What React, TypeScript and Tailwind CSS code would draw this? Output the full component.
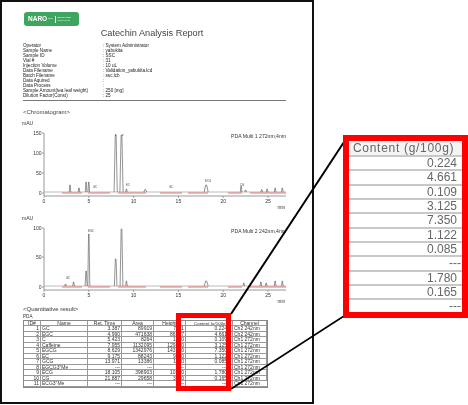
const font = { fontFamily: '"Liberation Sans", Arial, sans-serif' };

const info: [string, string][] = [
  ["Operator", ": System Administrator"],
  ["Sample Name", ": yabukita"],
  ["Sample ID", ": SSC"],
  ["Vial #", ": 31"],
  ["Injection Volume", ": 10 uL"],
  ["Data Filename", ": Validation_yabukita.lcd"],
  ["Batch Filename", ": ssc.lcb"],
  ["Data Aquired", ":"],
  ["Data Process", ":"],
  ["Sample Amount(tea leaf weight)", ": 250 [mg]"],
  ["Dilution Factor(Const)", ": 25"],
];

const rows: string[][] = [
  ["1", "GC", "3.387", "89919", "7711", "0.224", "Ch2 242nm"],
  ["2", "EGC", "4.990", "471638", "86567", "4.661", "Ch2 242nm"],
  ["3", "C", "5.423", "8264", "1300", "0.109", "Ch1 272nm"],
  ["4", "Caffeine", "7.955", "1132095", "129400", "3.125", "Ch1 272nm"],
  ["5", "EGCG", "8.629", "1342976", "143600", "7.350", "Ch1 272nm"],
  ["6", "EC", "9.175", "88243", "9100", "1.122", "Ch1 272nm"],
  ["7", "GCG", "13.971", "13386", "1100", "0.085", "Ch1 272nm"],
  ["8", 'EGCG3"Me', "---", "---", "---", "---", "Ch1 272nm"],
  ["9", "ECG", "18.105", "398903", "10400", "1.780", "Ch1 272nm"],
  ["10", "CG", "21.887", "29658", "3000", "0.165", "Ch1 272nm"],
  ["11", 'ECG3"Me', "---", "---", "---", "---", "Ch1 272nm"],
];

const head = ["ID#", "Name", "Ret. Time", "Area", "Height", "Content (g/100g)", "Channel"];
const callout = ["0.224", "4.661", "0.109", "3.125", "7.350", "1.122", "0.085", "---", "1.780", "0.165", "---"];

function peak(x: number, h: number, base: number, w = 1.4) {
  return `M${x - w} ${base} L${x - w * 0.25} ${base - h} L${x + w * 0.25} ${base - h} L${x + w} ${base}`;
}

function Chart({
  title,
  yLabels,
  peaks,
  height,
  top,
  mauY,
  notes,
}: {
  title: string;
  yLabels: [string, number][];
  peaks: [number, number, number?][];
  height: number;
  top: number;
  mauY: number;
  notes: [number, number, string][];
}) {
  const base = 74;
  const axis = 77;
  const ticks = [0, 5, 10, 15, 20, 25];
  const sx = (t: number) => 22 + t * 8.96;
  return (
    <svg width="264" height={height} viewBox={`0 0 264 ${height}`} className="block shrink-0">
      <text x="0" y={mauY} fontSize="5" fill="#333">mAU</text>
      <line x1="22" y1={top} x2="22" y2={axis} stroke="#555" strokeWidth="0.6" />
      <line x1="22" y1={axis} x2="264" y2={axis} stroke="#555" strokeWidth="0.6" />
      {yLabels.map(([l, y]) => (
        <g key={l}>
          <text x="19.5" y={y + 1.8} fontSize="5" textAnchor="end" fill="#333">{l}</text>
          <line x1="20" y1={y} x2="22" y2={y} stroke="#555" strokeWidth="0.5" />
        </g>
      ))}
      {ticks.map((t) => (
        <g key={t}>
          <line x1={sx(t)} y1={axis} x2={sx(t)} y2={axis + 2} stroke="#555" strokeWidth="0.5" />
          <text x={sx(t)} y={axis + 7} fontSize="5" textAnchor="middle" fill="#333">{t}</text>
        </g>
      ))}
      <text x="263" y={axis + 13} fontSize="4.6" textAnchor="end" fill="#333">min</text>
      <text x="264" y={top + 4.5} fontSize="5.1" textAnchor="end" fill="#333">{title}</text>
      <line x1="22" y1={base - 1} x2="264" y2={base - 1} stroke="#bbb" strokeWidth="1.2" />
      {peaks.map(([t, h, w], i) => (
        <path key={i} d={peak(sx(t), h, base - 1, w ?? 0.8)} fill="none" stroke="#666" strokeWidth="0.7" />
      ))}
      <path
        d={`M40 ${base} H60 M66 ${base} H88 M96 ${base} H124 M138 ${base} H160 M166 ${base} H186 M206 ${base} H220 M228 ${base} H264`}
        stroke="#e8504f"
        strokeWidth="0.8"
        fill="none"
      />
      {notes.map(([x, y, s], i) => (
        <text key={i} x={x} y={y} fontSize="2.8" fill="#444" textAnchor="middle">{s}</text>
      ))}
    </svg>
  );
}

export default function App() {
  return (
    <div className="relative w-[468px] h-[405px] bg-white overflow-hidden" style={font}>
      <div className="w-[314px] h-[404px] border-2 border-[#111] bg-white flex flex-col pl-[20px] pr-[26px] pt-[10px] text-[#333] blur-[0.35px]">
        <div className="w-[55px] h-[14px] rounded-[3px] bg-[#3fa45f] ml-[2px] flex items-center pl-[4px] gap-[1px] text-white shrink-0">
          <span className="text-[6.5px] font-bold leading-none">NARO</span>
          <span className="text-[2.5px] leading-none">hmp</span>
          <span className="w-[0.5px] h-[7px] bg-white mx-[1px]"></span>
          <span className="text-[2.5px] leading-[3px] w-[16px]">EDUCATED WITH NATI</span>
        </div>
        <div className="text-[9.2px] leading-[12px] text-center text-[#444] mt-[1px] pr-[4px] shrink-0">
          Catechin Analysis Report
        </div>
        <div className="mt-[5px] flex flex-col text-[4.6px] leading-[4.95px] text-[#222] shrink-0">
          {info.map(([a, b]) => (
            <div key={a} className="flex">
              <span className="w-[81px] shrink-0 pl-[1px] whitespace-nowrap">{a}</span>
              <span>{b}</span>
            </div>
          ))}
        </div>
        <div className="h-[1px] bg-[#777] mt-[2px] shrink-0 ml-[1px]"></div>
        <div className="text-[6px] leading-[6px] mt-[7.5px] pl-[1px] text-[#444] shrink-0">&lt;Chromatogram&gt;</div>
        <div className="mt-[4px] shrink-0">
          <Chart
            title="PDA Multi 1 272nm,4nm"
            height={94}
            top={14}
            mauY={6}
            yLabels={[["150", 14], ["100", 34], ["50", 54], ["0", 74]]}
            peaks={[[2.9, 7], [3.9, 4], [4.7, 10], [5, 10], [8, 57, 1.6], [8.65, 57, 1.6], [9.2, 3], [11.3, 2.5, 1.4], [18.1, 7, 2], [22, 6], [22.5, 2], [24.3, 2.5], [24.9, 3], [25.8, 4], [26.6, 4]]}
            notes={[[94, 17, "▾"], [101, 17, "▾"], [73, 69, "GC"], [106, 67, "EC"], [149, 69, "GC"], [186, 63, "ECG"], [220, 67, "CG"]]}
          />
        </div>
        <div className="shrink-0">
          <Chart
            title="PDA Multi 2 242nm,4nm"
            height={90}
            top={15}
            mauY={7}
            yLabels={[["100", 15], ["50", 44], ["0", 74]]}
            peaks={[[2.4, 2], [3.3, 4], [4.7, 15, 1], [5, 52, 1], [8, 27, 1.3], [8.65, 57, 1.4], [9.2, 5], [18.1, 5, 2], [22.3, 3], [24.2, 4], [24.8, 3], [25.8, 5], [26.6, 5]]}
            notes={[[69, 19, "EGC"], [46, 66, "GC"]]}
          />
        </div>
        <div className="text-[6px] leading-[6px] mt-[3.5px] pl-[1px] text-[#333] shrink-0">&lt;Quantitative result&gt;</div>
        <div className="text-[4.6px] leading-[5px] mt-[2px] pl-[1px] shrink-0">PDA</div>
        <div className="w-[245px] ml-[1px] mt-[0.5px] border border-[#888] grid grid-cols-[17px_47px_34px_32px_32px_47px_34px] text-[5px] leading-[5px] text-[#333] shrink-0">
          {head.map((h, i) => (
            <div
              key={h}
              className={`h-[5.5px] border-r border-b border-[#999] overflow-hidden whitespace-nowrap last:border-r-0 ${
                i === 5 ? "text-right pr-[5px] text-[4.4px]" : "text-center"
              }`}
            >
              {h}
            </div>
          ))}
          {rows.map((r) =>
            r.map((c, i) => (
              <div
                key={r[0] + i}
                className={`h-[5.5px] border-r border-b border-[#999] overflow-hidden whitespace-nowrap last:border-r-0 ${
                  i === 5 ? "text-right pr-[5px]" : i === 0 || i === 2 || i === 3 || i === 4 ? "text-right px-[1px]" : "text-left px-[1px]"
                }`}
              >
                {c}
              </div>
            ))
          )}
        </div>
      </div>

      <svg width="468" height="405" viewBox="0 0 468 405" className="absolute left-0 top-0 pointer-events-none">
        <line x1="231" y1="314" x2="344" y2="142" stroke="#000" strokeWidth="2" />
        <line x1="231" y1="389" x2="344" y2="316" stroke="#000" strokeWidth="1.5" />
      </svg>

      <div className="absolute left-[176px] top-[313px] w-[55px] h-[78px] border-[5px] border-[#f00]"></div>

      <div className="absolute left-[343px] top-[135px] w-[125px] h-[183px] border-[6px] border-[#f00] bg-white flex flex-col overflow-hidden">
        <div className="text-[12px] text-[#666] flex flex-col blur-[0.4px]">
          <div className="h-[16px] leading-[14px] text-[12px] pl-[4px] whitespace-nowrap tracking-[0.7px] bg-[#f4f4f4] border-b-2 border-[#c8c8c8] shrink-0">
            Content (g/100g)
          </div>
          {callout.map((v, i) => (
            <div
              key={i}
              className={`h-[14.35px] leading-[13px] text-right border-b-2 border-[#c8c8c8] last:border-b-0 shrink-0 ${
                v === "---" ? "pr-[1px]" : "pr-[5px]"
              }`}
            >
              {v}
            </div>
          ))}
        </div>
      </div>
    </div>
  );
}
